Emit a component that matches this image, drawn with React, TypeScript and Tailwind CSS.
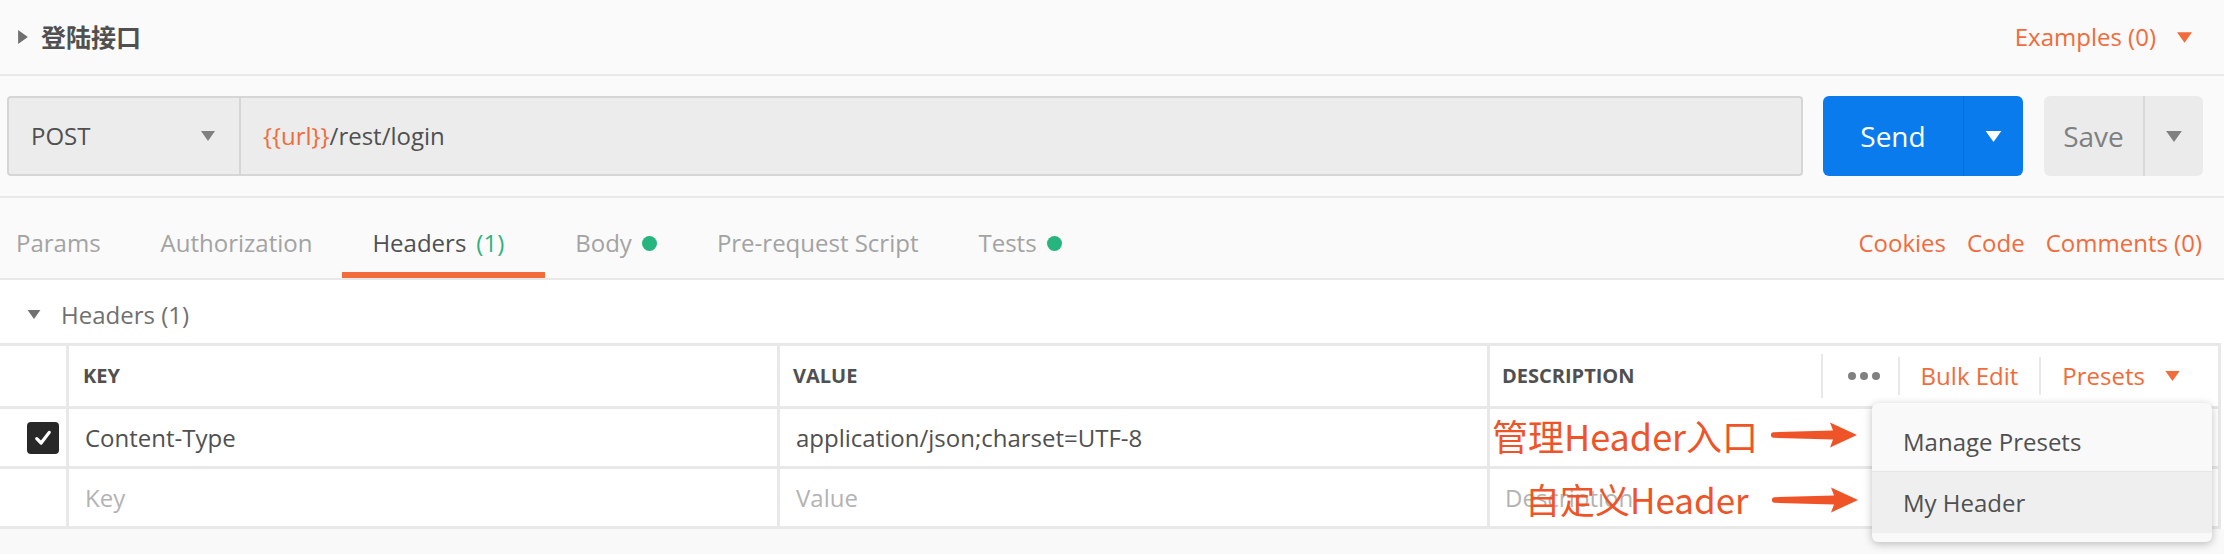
import React from "react";

const Caret = ({ className }: { className?: string }) => (
  <svg viewBox="0 0 10 7" className={className} fill="currentColor">
    <path d="M0 0h10L5 7z" />
  </svg>
);

const Arrow = ({ className }: { className?: string }) => (
  <svg viewBox="0 0 86 28" className={className} fill="#ef5428">
    <path d="M0 13.2 Q0 11.2 2.5 11.2 L62 9.6 L59 1.5 L86 14 L59 26.5 L62 18.4 L2.5 16.8 Q0 16.8 0 14.8 Z" />
  </svg>
);

const TABS = [
  { name: "Params" },
  { name: "Authorization" },
  { name: "Headers", count: "(1)", active: true },
  { name: "Body", dot: true },
  { name: "Pre-request Script" },
  { name: "Tests", dot: true },
];

export default function App() {
  return (
    <div className="relative w-[2224px] h-[554px] overflow-hidden bg-[#f9f9f9] font-['Open_Sans','Noto_Sans_CJK_SC',sans-serif] text-[#505050]">
      {/* Request title */}
      <div className="flex h-[76px] items-center justify-between border-b-2 border-[#e8e8e8] bg-[#fafafa] pl-[18px] pr-[32px]">
        <div className="flex items-center gap-[13px]">
          <svg viewBox="0 0 7 10" className="h-[14px] w-[10px] text-[#707070]" fill="currentColor">
            <path d="M0 0L7 5L0 10z" />
          </svg>
          <span className="font-['Noto_Sans_CJK_SC',sans-serif] text-[25px] font-bold text-[#505050]">
            登陆接口
          </span>
        </div>
        <div className="flex items-center gap-[21px] text-[24px] text-[#f26b3a]">
          <span>Examples (0)</span>
          <Caret className="h-[11px] w-[15px]" />
        </div>
      </div>

      {/* URL bar */}
      <div className="flex h-[122px] items-center border-b-2 border-[#e8e8e8] bg-[#fafafa] pl-[7px] pr-[21px]">
        <div className="flex h-[80px] flex-1 rounded-[4px] border-2 border-[#d6d6d6] bg-[#ececec]">
          <div className="flex w-[232px] items-center justify-between border-r-2 border-[#d6d6d6] pl-[22px] pr-[24px]">
            <span className="text-[24px] text-[#505050]">POST</span>
            <Caret className="h-[10px] w-[14px] text-[#808080]" />
          </div>
          <div className="flex items-center pl-[22px] text-[24px]">
            <span className="text-[#f26b3a]">{"{{url}}"}</span>
            <span className="text-[#505050]">/rest/login</span>
          </div>
        </div>
        <div className="ml-[20px] flex h-[80px] w-[200px] rounded-[6px] bg-[#097bed] text-white">
          <div className="flex w-[140px] items-center justify-center text-[28px]">Send</div>
          <div className="w-[1px] bg-[#0b6bd0]" />
          <div className="flex flex-1 items-center justify-center">
            <Caret className="h-[11px] w-[17px]" />
          </div>
        </div>
        <div className="ml-[21px] flex h-[80px] w-[159px] rounded-[6px] bg-[#ebebeb] text-[#808080]">
          <div className="flex w-[99px] items-center justify-center text-[28px]">Save</div>
          <div className="w-[2px] bg-[#d9d9d9]" />
          <div className="flex flex-1 items-center justify-center">
            <Caret className="h-[11px] w-[16px]" />
          </div>
        </div>
      </div>

      {/* Tabs */}
      <div className="flex h-[82px] items-stretch justify-between border-b-2 border-[#e8e8e8] bg-[#fafafa] pr-[22px]">
        <div className="-ml-[14px] flex">
          {TABS.map((tab) => (
            <div
              key={tab.name}
              className={`relative flex items-center gap-[10px] pl-[30px] pt-[10px] text-[24px] ${
                tab.active ? "pr-[41px] text-[#505050]" : "pr-[30px] text-[#a3a3a3]"
              }`}
            >
              <span>{tab.name}</span>
              {tab.count && <span className="text-[#2cb37f]">{tab.count}</span>}
              {tab.dot && <span className="h-[15px] w-[15px] rounded-full bg-[#26b47f]" />}
              {tab.active && <span className="absolute bottom-0 left-0 right-0 h-[6px] bg-[#f26b3a]" />}
            </div>
          ))}
        </div>
        <div className="flex items-center gap-[21px] pt-[10px] text-[24px] text-[#f26b3a]">
          <span>Cookies</span>
          <span>Code</span>
          <span>Comments (0)</span>
        </div>
      </div>

      {/* Headers section */}
      <div className="bg-white">
        <div className="flex h-[63px] items-center gap-[20px] pl-[27px] pt-[6px] text-[24px] text-[#707070]">
          <Caret className="h-[9px] w-[14px]" />
          <span>Headers (1)</span>
        </div>
        <div className="w-[2221px] border-r-[3px] border-t-[3px] border-[#e8e8e8] text-[24px]">
          {/* header row */}
          <div className="flex h-[63px] border-b-[3px] border-[#e8e8e8]">
            <div className="w-[69px] border-r-[3px] border-[#e8e8e8]" />
            <div className="flex w-[711px] items-center border-r-[3px] border-[#e8e8e8] px-[14px] text-[20px] font-bold">
              KEY
            </div>
            <div className="flex w-[710px] items-center border-r-[3px] border-[#e8e8e8] px-[13px] text-[20px] font-bold">
              VALUE
            </div>
            <div className="flex flex-1 items-center pl-[12px] pr-[38px]">
              <span className="text-[20px] font-bold">DESCRIPTION</span>
              <div className="ml-auto flex items-center">
                <div className="h-[44px] w-[2px] bg-[#e8e8e8]" />
                <div className="flex gap-[4px] pl-[25px] pr-[18px]">
                  <span className="h-[8px] w-[8px] rounded-full bg-[#808080]" />
                  <span className="h-[8px] w-[8px] rounded-full bg-[#808080]" />
                  <span className="h-[8px] w-[8px] rounded-full bg-[#808080]" />
                </div>
                <div className="h-[38px] w-[2px] bg-[#e8e8e8]" />
                <span className="px-[21px] text-[#f26b3a]">Bulk Edit</span>
                <div className="h-[38px] w-[2px] bg-[#e8e8e8]" />
                <div className="flex items-center gap-[20px] pl-[21px] text-[#f26b3a]">
                  <span>Presets</span>
                  <Caret className="h-[10px] w-[15px]" />
                </div>
              </div>
            </div>
          </div>
          {/* row 1 */}
          <div className="flex h-[60px] border-b-[3px] border-[#e8e8e8]">
            <div className="flex w-[69px] items-center border-r-[3px] border-[#e8e8e8] pl-[27px]">
              <div className="flex h-[32px] w-[32px] items-center justify-center rounded-[4px] bg-[#282828]">
                <svg viewBox="0 0 16 16" className="h-[20px] w-[20px]" fill="none" stroke="white" strokeWidth="2.6" strokeLinecap="round" strokeLinejoin="round">
                  <path d="M3 8.5L6.5 12L13 3.5" />
                </svg>
              </div>
            </div>
            <div className="flex w-[711px] items-center border-r-[3px] border-[#e8e8e8] px-[16px]">Content-Type</div>
            <div className="flex w-[710px] items-center border-r-[3px] border-[#e8e8e8] px-[16px]">
              application/json;charset=UTF-8
            </div>
            <div className="flex-1" />
          </div>
          {/* row 2 */}
          <div className="flex h-[60px] border-b-[3px] border-[#e8e8e8] text-[#b3b3b3]">
            <div className="w-[69px] border-r-[3px] border-[#e8e8e8]" />
            <div className="flex w-[711px] items-center border-r-[3px] border-[#e8e8e8] px-[16px]">Key</div>
            <div className="flex w-[710px] items-center border-r-[3px] border-[#e8e8e8] px-[16px]">Value</div>
            <div className="flex flex-1 items-center pl-[15px]">Description</div>
          </div>
        </div>
      </div>

      {/* Annotations */}
      <span className="absolute left-[1492px] top-[413px] font-['Noto_Sans_CJK_SC',sans-serif] text-[36px] leading-[44px] text-[#ef5428]">
        管理Header入口
      </span>
      <span className="absolute left-[1525px] top-[477px] font-['Noto_Sans_CJK_SC',sans-serif] text-[35px] leading-[44px] text-[#ef5428]">
        自定义Header
      </span>
      <Arrow className="absolute left-[1771px] top-[421px] h-[28px] w-[86px]" />
      <Arrow className="absolute left-[1772px] top-[486px] h-[28px] w-[86px]" />

      {/* Presets menu */}
      <div className="absolute left-[1872px] top-[403px] w-[340px] overflow-hidden rounded-[6px] bg-[#f9f9f9] py-[9px] text-[24px] text-[#505050] shadow-[0_2px_8px_rgba(0,0,0,0.25)]">
        <div className="flex h-[60px] items-center border-b border-[#e6e6e6] pl-[31px]">Manage Presets</div>
        <div className="flex h-[61px] items-center bg-[#efefef] pl-[31px]">My Header</div>
      </div>
    </div>
  );
}
